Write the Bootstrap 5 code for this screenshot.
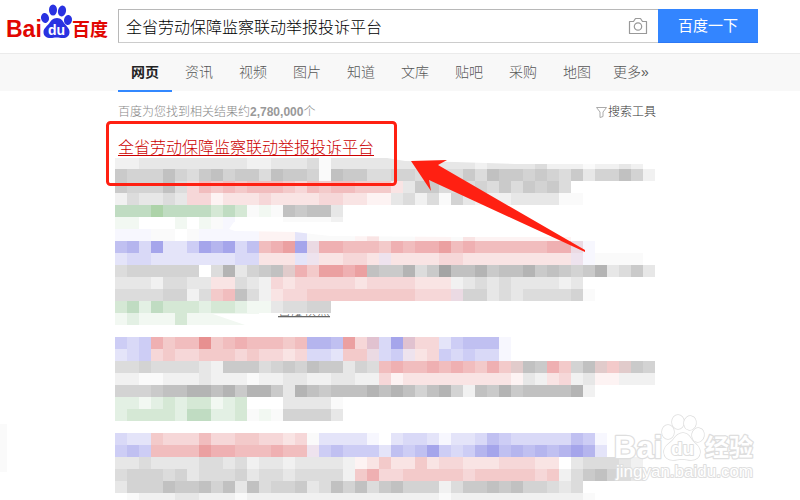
<!DOCTYPE html>
<html lang="zh-CN">
<head>
<meta charset="utf-8">
<meta name="viewport" content="width=device-width, initial-scale=1">
<title>全省劳动保障监察联动举报投诉平台</title>
<link href="https://cdn.jsdelivr.net/npm/bootstrap@5.3.0/dist/css/bootstrap.min.css" rel="stylesheet">
<style>
  body { font-family: "Liberation Sans", "Noto Sans CJK SC", sans-serif; font-size: 14px; font-weight: 300; color: #333; background: #fff; overflow-x: hidden; }
  .brand-link { width: 118px; padding: 4px 0 0 4px; }
  .main-col { max-width: 540px; }
  .indent { padding-left: 118px; }
  .search-row { height: 53px; }
  .search-form { padding-top: 9px; }
  .search-box { height: 34px; border: 1px solid #ccc; border-top-color: #b8b8b8; border-left-color: #b8b8b8; border-right: 0; }
  .search-box .form-control { height: 32px; padding: 0 7px; font-size: 16px; font-weight: 300; color: #000; box-shadow: none; }
  .camera-btn { width: 40px; }
  .go-btn { width: 100px; height: 34px; font-size: 15px; line-height: 33px; background: #3385ff; border-bottom: 1px solid #2d78f4; }
  .go-btn:hover { background: #317ef3; }
  .tab-bar { height: 38px; background: #f8f8f8; border-top: 1px solid #ebebeb; }
  .tab-bar .nav-link { width: 54px; height: 38px; padding: 0; line-height: 36px; text-align: center; color: #555; border-bottom: 2px solid transparent; white-space: nowrap; }
  .tab-bar .nav-link.active { color: #222; font-weight: 700; border-bottom-color: #38f; }
  .info-row { height: 46px; padding-top: 13px; font-size: 12px; line-height: 16px; color: #888; }
  .info-row b { font-weight: 700; color: #999; }
  .info-row a { color: #333; gap: 1px; margin-right: 2px; }
  .hit-title { height: 20px; margin: 0; font-size: 16px; line-height: 22px; font-weight: 300; }
  .hit-title a { color: #c00; text-underline-offset: 2px; }
  .mosaic { display: block; width: 540px; margin-left: -3px; }
  .callout { left: 104px; top: 118px; pointer-events: none; }
  .watermark { left: 608px; top: 408px; pointer-events: none; }
  .edge-tab { left: 0; top: 424px; width: 7px; height: 48px; background: #fafafa; }
</style>
</head>
<body>
<div class="position-relative">
  <header class="search-row d-flex">
    <a class="brand-link flex-shrink-0" href="#" aria-label="百度首页">
      <svg class="d-block" width="108" height="38" viewBox="4 4 108 38" role="img" aria-label="Bai du 百度">
        <text x="6" y="37" font-family="Liberation Sans" font-weight="700" font-size="23" fill="#e10601">Bai</text>
        <g fill="#2932e1">
          <ellipse cx="45" cy="18" rx="4" ry="5" transform="rotate(-12 45 18)"/>
          <ellipse cx="53" cy="10" rx="4" ry="5.500"/>
          <ellipse cx="62" cy="11" rx="4" ry="5.500" transform="rotate(14 62 11)"/>
          <ellipse cx="68" cy="20" rx="4" ry="5" transform="rotate(10 68 20)"/>
          <path d="M57 18c4 0 6 3 7 5c2 3 5.500 5 5.500 9c0 4-3 6-6.500 6c-3 0-4-.5-6.500-.5s-3.500.5-6 .5c-4 0-7-2-7-6c0-4 4-6 6-9c1-2 3.500-5 7.500-5z"/>
        </g>
        <text x="48" y="35" font-family="Liberation Sans" font-weight="700" font-size="14" fill="#fff">du</text>
        <text x="72" y="36" font-family="Noto Sans CJK SC" font-weight="700" font-size="18" fill="#e10601">百度</text>
      </svg>
    </a>
    <form class="search-form d-flex flex-grow-1" onsubmit="return false">
      <div class="search-box main-col d-flex flex-grow-1 bg-white">
        <input class="form-control border-0 rounded-0 bg-transparent" type="text" aria-label="搜索" value="全省劳动保障监察联动举报投诉平台">
        <button class="camera-btn btn p-0 border-0 flex-shrink-0 d-flex align-items-center justify-content-center" type="button" aria-label="按图片搜索">
          <svg width="20" height="18" viewBox="0 0 20 18" fill="none" stroke="#999" stroke-width="1.2"><path d="M1.500 4.500h4l2-3h5l2 3h4v12h-17z" stroke-linejoin="round"/><circle cx="10" cy="9.500" r="3.700"/></svg>
        </button>
      </div>
      <button class="go-btn btn rounded-0 border-top-0 border-start-0 border-end-0 text-white p-0 flex-shrink-0" type="submit">百度一下</button>
    </form>
  </header>

  <nav class="tab-bar indent" aria-label="搜索类别">
    <div class="nav flex-nowrap">
      <a class="nav-link active" aria-current="page" href="#">网页</a>
      <a class="nav-link" href="#">资讯</a>
      <a class="nav-link" href="#">视频</a>
      <a class="nav-link" href="#">图片</a>
      <a class="nav-link" href="#">知道</a>
      <a class="nav-link" href="#">文库</a>
      <a class="nav-link" href="#">贴吧</a>
      <a class="nav-link" href="#">采购</a>
      <a class="nav-link" href="#">地图</a>
      <a class="nav-link" href="#">更多»</a>
    </div>
  </nav>

  <main class="indent">
    <div class="main-col">
      <div class="info-row d-flex justify-content-between align-items-start">
        <span>百度为您找到相关结果约<b>2,780,000</b>个</span>
        <a class="d-flex align-items-center text-decoration-none" href="#"><svg width="11" height="11" viewBox="0 0 11 11" fill="none" stroke="#aaa"><path d="M.5.500h10L7 5v4.500L4 10.500V5z"/></svg>搜索工具</a>
      </div>
      <h3 class="hit-title"><a href="#">全省劳动保障监察联动举报投诉平台</a></h3>
      <svg class="mosaic" height="343" viewBox="0 0 540 343" aria-hidden="true">
        <g id="cells" shape-rendering="crispEdges"></g>
        <g fill="#fff">
          <path d="M0 0H540V7H400L340 5L290 4L272 1H0z"/>
          <path d="M119 65H540V80H340L215 79L180 75L120 74L114 72z"/>
          <path d="M98 157L130 168H240V157z"/>
        </g>
        <clipPath id="strip"><path d="M90 157H220V161H90z"/></clipPath>
        <g clip-path="url(#strip)" font-family="Noto Sans CJK SC" font-size="13">
          <text x="163" y="158" fill="#666" text-decoration="underline">百度快照</text>
        </g>
      </svg>
    </div>
  </main>

  <div class="edge-tab position-absolute"></div>

  <svg class="callout position-absolute" width="490" height="140" viewBox="104 118 490 140" aria-hidden="true">
    <rect x="107.500" y="122.500" width="288" height="62" rx="3" fill="none" stroke="#ff2012" stroke-width="3"/>
    <path d="M411 161L447 160L438 165L585 250V252L429 180L431 191z" fill="#ff2012"/>
  </svg>

  <svg class="watermark position-absolute" width="152" height="80" viewBox="608 408 152 80" aria-label="Baidu 经验">
    <g fill="#fff" stroke="#dedede" stroke-width="1.500" stroke-linejoin="round" paint-order="stroke">
      <g stroke-width="2.500">
        <text x="614" y="458" font-family="Liberation Sans" font-weight="700" font-size="31">Bai</text>
        <text x="705" y="456" font-family="Noto Sans CJK SC" font-weight="700" font-size="24">经验</text>
      </g>
      <ellipse cx="668" cy="432" rx="6" ry="7"/>
      <ellipse cx="678" cy="422" rx="6" ry="7"/>
      <ellipse cx="690" cy="423" rx="6" ry="7" transform="rotate(12 690 423)"/>
      <ellipse cx="698" cy="435" rx="6" ry="7" transform="rotate(12 698 435)"/>
      <path d="M683 433c5 0 7 4 9 7c3 4 8 6 8 12c0 5-4 8-9 8c-4 0-5-1-9-1s-5 1-9 1c-5 0-9-3-9-8c0-6 5-8 9-12c2-3 5-7 10-7z"/>
      <text x="671" y="455" font-family="Liberation Sans" font-weight="700" font-size="19" stroke-width="2">du</text>
      <text x="616" y="477" font-family="Liberation Sans" font-size="17" stroke-width="2">jingyan.baidu.com</text>
    </g>
  </svg>
</div>

<script>
  // One letter per 12px cell: a-i greys, A-H reds, k-q blues, r-v greens, w-y and X mixed tints.
  const tint = {
    a:'#fafafa', b:'#f1f1f1', c:'#e7e7e7', d:'#dcdcdc', e:'#d3d3d3', f:'#cacaca', g:'#c1c1c1', h:'#b4b4b4', i:'#a4a4a4',
    A:'#fdf3f3', B:'#f9e4e4', C:'#f6d7d8', D:'#f3caca', E:'#f1bdbe', F:'#efb0b2', G:'#eba0a1', H:'#e79090',
    k:'#f7f7fe', l:'#e4e4f9', m:'#d9d9f7', n:'#cdcdf5', o:'#c0c0f1', p:'#b5b5ee', q:'#a5a5eb',
    r:'#f2f8f2', s:'#e3f0e4', t:'#d5e8d5', u:'#c0dcc2', v:'#add3a9',
    w:'#e1cbcb', x:'#ebdae3', y:'#eee3ee', X:'#e1c2d0'
  };
  const rows = [
    'bbcccccccccbbcccdaccccccccccccbccccdbbbabbcb',
    'feeegedfgeffdgffeagffddeededdfdgffefedfceegeb',
    'feeegdCEDEDEEEDCEDEEDDDBcffdddedfdfefd',
    'bdccdcCCABBBCBBBBCCBBAAcdbdaecbbbccccaa',
    'uuuvuuuututaragfggc',
    'rr...r.rak....aaaab',
    'kkkaa.akkkkkAAAlaaaaABaaaAAAaBAAAAAAAA',
    'opmqllnqpqmoEFGqxFFEEEDFEFFGEFEEEEEEFFxk',
    'lmmlllllllmmBBBlyBBCCByBBBBCCBBBBBBBBBykaaaa',
    'deeeeee.dhcefgwFDGGFGgffhdfigghfgghfgfefhcdfc',
    'cccbddccBBdcbCBCCCCCBCCCCBBBbcdcdccccbc',
    'ddddeebdDEgdbBCCDDDDDDDDDCCCxeecdcddddea',
    'tusutttsttsrrcddee',
    'rsrrrtrrrrrr',
    '',
    'nmnFDEEHDEFEEEDEppoGCXmqXCClnoook',
    'lmnCDCCDDDCDCCBCmmlDDxmnyBCnmnmmk',
    'ddeddddcbfffdefegffcedEFEEFEFEDFDwgfFDegwDwfe',
    'bbaabbbcbbbabbccbbccbbCABBBBBBBBBAcbBCbcAAbbb',
    'eeefgghhghfhhfchgfggghghgeghebgfhfgggghb',
    'ssrststtrst...cccca',
    'sttttsuusstaraeeeec',
    '',
    'mllDCCCECCDDCCBCallllk.lmmlkllmonmmmmmonk',
    'nonEEEEGFFEEEFEEynonnnlonoqnmnpqopopopqpl',
    'ccdccccddcdbccbccccbABDBBDBCCBBBCCCBB.cdddcb',
    'deeedecdddecddcddddbDFCCDDDDDCDDDDDCDbdfgedc',
    'ceeegffgegcgdeefcdgegdfgeeebdffgfgeedcd',
    '.abbbccbbbabbbbbbbbbbbbbbbbabbbbbbbbbbba'
  ];
  const layer = document.getElementById('cells');
  rows.forEach((row, r) => [...row].forEach((key, c) => {
    if (!tint[key]) return;
    const cell = document.createElementNS('http://www.w3.org/2000/svg', 'rect');
    cell.setAttribute('x', c * 12);
    cell.setAttribute('y', r * 12);
    cell.setAttribute('width', 12);
    cell.setAttribute('height', 12);
    cell.setAttribute('fill', tint[key]);
    layer.append(cell);
  }));
</script>
<script src="https://cdn.jsdelivr.net/npm/bootstrap@5.3.0/dist/js/bootstrap.bundle.min.js"></script>
</body>
</html>
